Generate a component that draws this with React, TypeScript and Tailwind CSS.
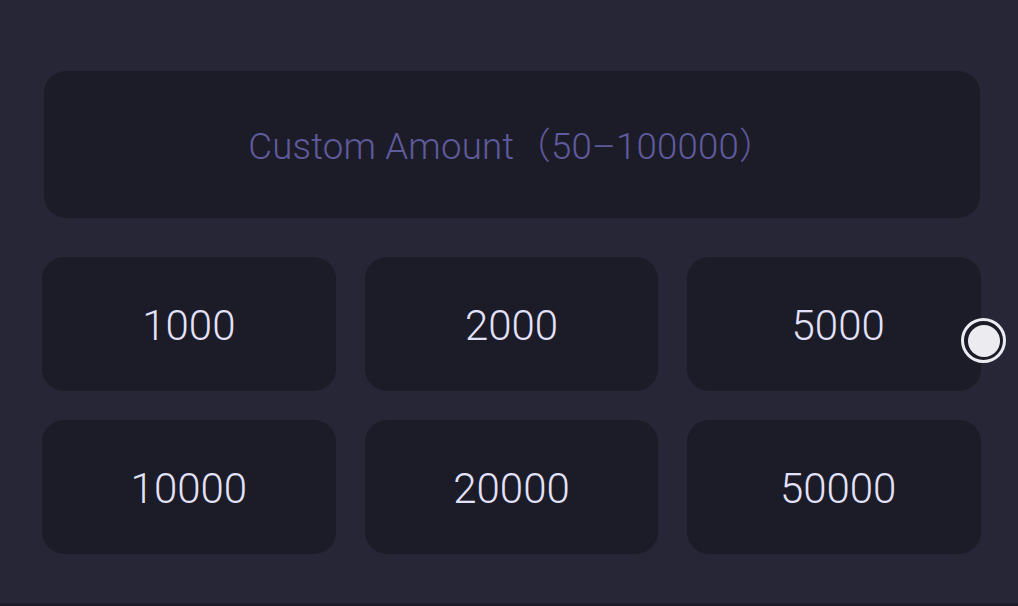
import React, { useState } from "react";

const amounts = [1000, 2000, 5000, 10000, 20000, 50000];

export default function App() {
  const [selected] = useState<number | null>(null);

  return (
    <div
      className="relative h-[606px] w-[1018px] overflow-hidden border-b-[3px] border-[#1d1d29] bg-[#262636]"
      style={{ fontFamily: "Roboto, 'Noto Sans CJK SC', sans-serif" }}
    >
      <div className="flex flex-col pl-[42px] pr-[37px] pt-[71px]">
        {/* Custom amount input */}
        <div className="ml-[2px] mr-[1px] flex h-[147px] items-center justify-center rounded-[22px] bg-[#1c1c28] pt-[3px]">
          <span className="text-[36.6px] font-light tracking-[0.2px] text-[#5f5a9c]">
            Custom Amount
            <span style={{ fontFamily: "'Noto Sans CJK SC', sans-serif" }}>（</span>
            50–100000
            <span style={{ fontFamily: "'Noto Sans CJK SC', sans-serif" }}>）</span>
          </span>
        </div>

        {/* Preset amounts */}
        <div className="mt-[39px] grid grid-cols-3 gap-[29px]">
          {amounts.map((a, i) => (
            <button
              key={a}
              className={`flex h-[134px] items-center justify-center rounded-[22px] pt-[3px] text-[42px] font-light text-[#e4e2fb] ${
                i % 3 === 2 ? "pl-[8px]" : ""
              } ${selected === a ? "bg-[#2f2d4a]" : "bg-[#1c1c28]"}`}
            >
              {a}
            </button>
          ))}
        </div>
      </div>

      {/* floating radio */}
      <div className="absolute left-[961px] top-[318px] flex h-[45px] w-[45px] items-center justify-center rounded-full border-[3px] border-[#ebebf2] bg-[#1c1c28]">
        <div className="h-[32px] w-[32px] rounded-full bg-[#ebebf0]" />
      </div>
    </div>
  );
}
